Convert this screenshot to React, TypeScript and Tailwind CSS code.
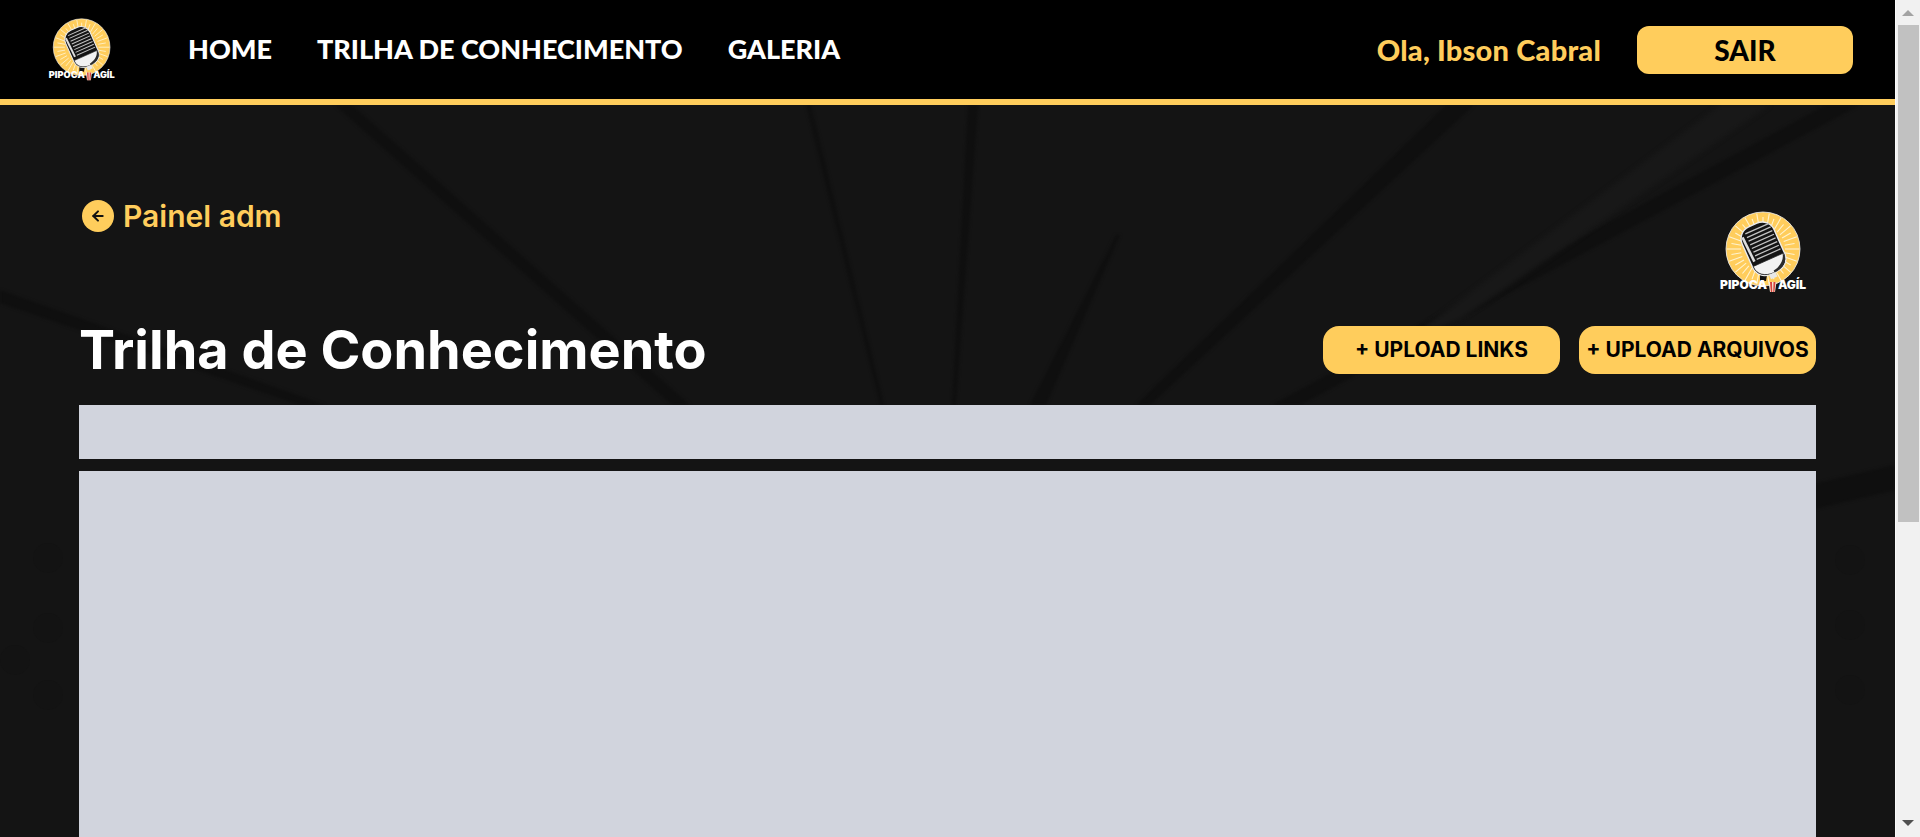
import { ArrowLeft } from "lucide-react";

const rayAngles = Array.from({ length: 36 }, (_, i) => (i * Math.PI * 2) / 36);

// Same artwork in the header and next to the page title, only scaled
function Logo({ className }: { className: string }) {
  return (
    <svg viewBox="0 0 110 90" className={className}>
      <circle cx="63" cy="42" r="37" fill="#ffcd5c" stroke="#f4f4f4" strokeWidth="0.8" />
      {rayAngles.map((a, i) => (
        <line
          key={i}
          x1={63 + Math.cos(a) * 22}
          y1={42 + Math.sin(a) * 22}
          x2={63 + Math.cos(a) * (i % 2 ? 32 : 36)}
          y2={42 + Math.sin(a) * (i % 2 ? 32 : 36)}
          stroke="#fff3cf"
          strokeWidth="1.1"
        />
      ))}
      <path d="M60 64 L68 62 L66 74 L60 74 Z" fill="#111" />
      <g transform="rotate(-24 63 42)">
        <rect x="46" y="16" width="35" height="52" rx="13" fill="#141414" stroke="#ececec" strokeWidth="1.4" />
        <path d="M49 23 L50 50" stroke="#dcdcdc" strokeWidth="2.6" />
        {[21, 25, 29, 33, 37, 41, 45, 49].map((y) => (
          <line key={y} x1="53" y1={y} x2="79" y2={y} stroke="#c4c4c4" strokeWidth="1.3" />
        ))}
        <path d="M47 54 H80 V55 C80 63 72 68 63 68 C54 68 47 63 47 55 Z" fill="#f2f2f2" stroke="#222" strokeWidth="0.7" />
        <path d="M64 66 C72 65 78 60 79 54 L80 56 C80 63 73 68 64 68 Z" fill="#2b2b2b" />
        <rect x="58" y="68" width="7" height="5" fill="#e8e8e8" />
      </g>
      <g fontFamily="Inter, sans-serif" fontWeight="900" fontSize="12" fill="#fff">
        <text x="20" y="82" textLength="47" lengthAdjust="spacing">PIPOCA</text>
        <text x="78" y="82" textLength="28" lengthAdjust="spacing">AGÍL</text>
      </g>
      <path d="M68.5 75 H76.5 L75 85 H70 Z" fill="#f3ead8" />
      <path d="M70 75 H72 L72.3 85 H70.8 Z M73.5 75 H75.5 L74.4 85 H73.2 Z" fill="#d8433c" />
    </svg>
  );
}

// Faint rays behind the page, coordinates are page pixels minus the header
function Backdrop() {
  return (
    <svg viewBox="0 0 1895 732" preserveAspectRatio="none" className="absolute inset-0 w-[1895px] h-[732px]">
      <g fill="#0f0f0f" className="blur-[1.5px]">
        <polygon points="335,0 352,0 690,300 672,300" />
        <polygon points="0,185 0,198 300,300 325,300" />
        <polygon points="806,0 811,0 884,300 880,300" />
        <polygon points="968,0 978,0 956,300 952,300" />
        <polygon points="1446,0 1474,0 1150,300 1136,300" />
        <polygon points="1116,130 1120,130 1046,300 1030,300" />
        <polygon points="1826,0 1860,0 1300,300 1272,300" />
        <polygon points="1810,380 1895,360 1895,385 1810,405" />
      </g>
      <polygon points="1720,0 1770,0 1460,215 1400,240" fill="#181818" className="blur-[2px]" />
      <g fill="#131313">
        <circle cx="1850" cy="455" r="15" />
        <circle cx="1850" cy="520" r="15" />
        <circle cx="1850" cy="585" r="15" />
        <circle cx="48" cy="453" r="15" />
        <circle cx="48" cy="523" r="15" />
        <circle cx="15" cy="555" r="15" />
        <circle cx="48" cy="590" r="15" />
      </g>
    </svg>
  );
}

function Scrollbar() {
  return (
    <div className="w-[25px] h-full bg-[#f1f1f1] border-l border-[#fafafa] flex flex-col items-center">
      <div className="h-[25px] flex items-center justify-center">
        <svg viewBox="0 0 12 6" className="w-3 h-1.5">
          <polygon points="6,0 12,6 0,6" fill="#a3a3a3" />
        </svg>
      </div>
      <div className="w-[21px] h-[497px] bg-[#c1c1c1]" />
      <div className="mt-auto h-[28px] flex items-center justify-center">
        <svg viewBox="0 0 12 6" className="w-3 h-1.5">
          <polygon points="0,0 12,0 6,6" fill="#505050" />
        </svg>
      </div>
    </div>
  );
}

export default function App() {
  return (
    <div className="flex h-screen overflow-hidden bg-[#141414]">
      <div className="flex-1 min-w-0 flex flex-col">
        {/* Header */}
        <header className="h-[105px] shrink-0 bg-black border-b-[6px] border-[#ffcd5c] flex items-center pl-[33px] pr-[42px] font-['Lato'] font-black">
          <Logo className="w-[85px] h-[69px] shrink-0" />
          <nav className="flex items-center gap-[45px] ml-[70px] text-[27px] text-white">
            <a>HOME</a>
            <a>TRILHA DE CONHECIMENTO</a>
            <a>GALERIA</a>
          </nav>
          <span className="ml-auto text-[29px] tracking-[0.2px] text-[#ffcd5c]">Ola, Ibson Cabral</span>
          <button className="ml-9 w-[216px] h-12 rounded-xl bg-[#ffcd5c] text-black text-[28px]">SAIR</button>
        </header>

        <main className="relative flex-1 min-h-0 flex flex-col pt-[95px] pl-[79px] pr-[79px] font-['Inter']">
          <Backdrop />
          <div className="relative h-[95px] shrink-0 flex items-start justify-between">
            <a className="flex items-center gap-[9px] text-[30px] leading-8 font-semibold text-[#ffcd5c]">
              <span className="w-8 h-8 rounded-full bg-[#ffcd5c] flex items-center justify-center ml-[3px]">
                <ArrowLeft size={16} strokeWidth={3} className="text-[#111]" />
              </span>
              Painel adm
            </a>
            <Logo className="w-[110px] h-[90px] mt-[7px] mr-[6px]" />
          </div>

          <div className="relative mt-[31px] h-12 shrink-0 flex items-center justify-between">
            <h1 className="text-[54px] leading-none font-bold text-white">Trilha de Conhecimento</h1>
            <div className="flex gap-[19px]">
              <button className="w-[237px] h-12 rounded-2xl bg-[#ffcd5c] text-black text-[21px] font-bold">+ UPLOAD LINKS</button>
              <button className="w-[237px] h-12 rounded-2xl bg-[#ffcd5c] text-black text-[21px] font-bold whitespace-nowrap">+ UPLOAD ARQUIVOS</button>
            </div>
          </div>

          <div className="relative mt-[31px] h-[54px] shrink-0 bg-[#d1d4dd]" />
          <div className="relative mt-3 h-[600px] shrink-0 bg-[#d1d4dd]" />
        </main>
      </div>
      <Scrollbar />
    </div>
  );
}
